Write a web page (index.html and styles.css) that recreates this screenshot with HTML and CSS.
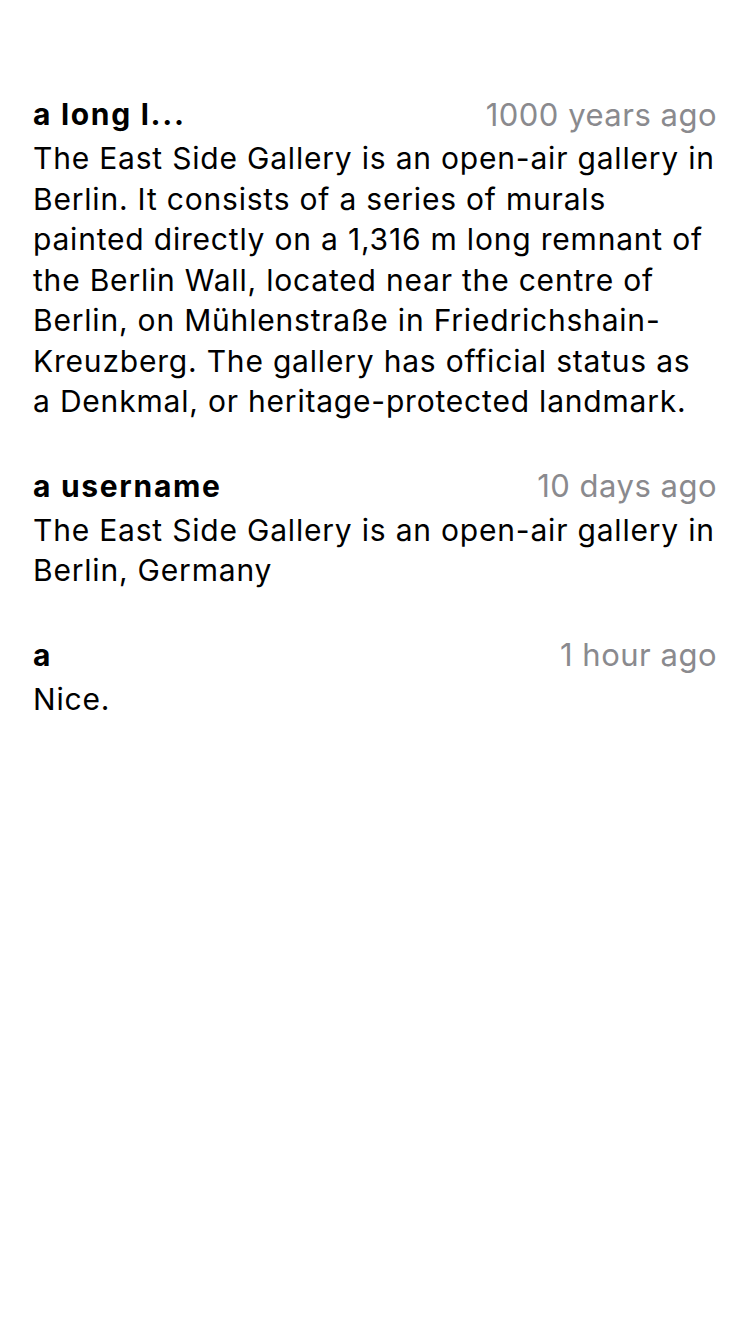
FILE: index.html
```html
<!DOCTYPE html>
<html>
<head>
<meta charset="utf-8">
<link rel="stylesheet" href="styles.css">
</head>
<body>
<main class="list">
  <article class="comment">
    <header class="head">
      <span class="name">a long l...</span>
      <span class="time">1000 years ago</span>
    </header>
    <p class="text">The East Side Gallery is an open-air gallery in Berlin. It consists of a series of murals painted directly on a 1,316 m long remnant of the Berlin Wall, located near the centre of Berlin, on Mühlenstraße in Friedrichshain-Kreuzberg. The gallery has official status as a Denkmal, or heritage-protected landmark.</p>
  </article>
  <article class="comment">
    <header class="head">
      <span class="name">a username</span>
      <span class="time">10 days ago</span>
    </header>
    <p class="text">The East Side Gallery is an open-air gallery in Berlin, Germany</p>
  </article>
  <article class="comment">
    <header class="head">
      <span class="name">a</span>
      <span class="time">1 hour ago</span>
    </header>
    <p class="text">Nice.</p>
  </article>
</main>
</body>
</html>
```
FILE: styles.css
```css
html, body {
  margin: 0;
  padding: 0;
  background: #ffffff;
}
body {
  font-family: Inter, "Noto Sans", sans-serif;
  color: #000000;
  width: 750px;
}
.list {
  display: flex;
  flex-direction: column;
  gap: 44px;
  padding: 94px 33px 0 33px;
}
.comment {
  display: flex;
  flex-direction: column;
  gap: 4px;
}
.head {
  display: flex;
  justify-content: space-between;
  align-items: center;
  height: 40px;
}
.name {
  font-size: 30px;
  font-weight: 700;
  letter-spacing: 1.7px;
}
.time {
  font-size: 31px;
  color: #8a8a8e;
  letter-spacing: 0.5px;
}
.text {
  margin: 0;
  font-size: 30px;
  line-height: 40.5px;
  letter-spacing: 0.8px;
}
```
